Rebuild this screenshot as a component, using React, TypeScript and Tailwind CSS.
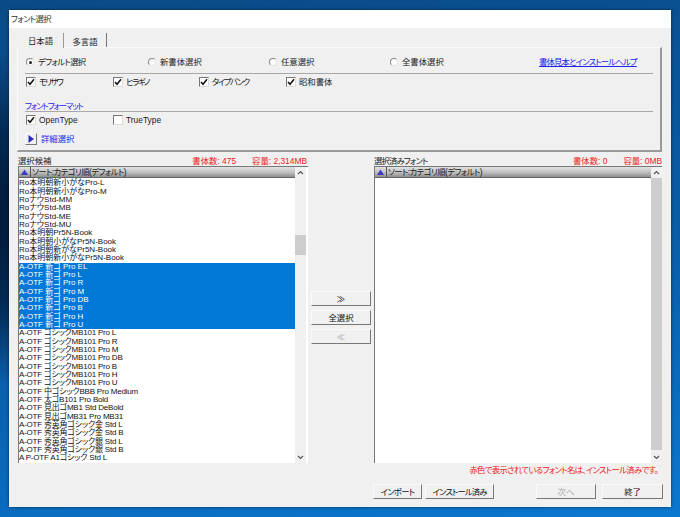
const FONT = "font-['Liberation_Sans','Noto_Sans_CJK_JP',sans-serif]";

const left = [
  "Ro本明朝新小がなPro-L", "Ro本明朝新小がなPro-M", "RoナウStd-MM", "RoナウStd-MB", "RoナウStd-ME", "RoナウStd-MU",
  "Ro本明朝Pr5N-Book", "Ro本明朝小がなPr5N-Book", "Ro本明朝新がなPr5N-Book", "Ro本明朝新小がなPr5N-Book",
  "A-OTF 新ゴ Pro EL", "A-OTF 新ゴ Pro L", "A-OTF 新ゴ Pro R", "A-OTF 新ゴ Pro M", "A-OTF 新ゴ Pro DB", "A-OTF 新ゴ Pro B", "A-OTF 新ゴ Pro H", "A-OTF 新ゴ Pro U",
  "A-OTF ゴシックMB101 Pro L", "A-OTF ゴシックMB101 Pro R", "A-OTF ゴシックMB101 Pro M", "A-OTF ゴシックMB101 Pro DB", "A-OTF ゴシックMB101 Pro B", "A-OTF ゴシックMB101 Pro H", "A-OTF ゴシックMB101 Pro U",
  "A-OTF 中ゴシックBBB Pro Medium", "A-OTF 太ゴB101 Pro Bold", "A-OTF 見出ゴMB1 Std DeBold", "A-OTF 見出ゴMB31 Pro MB31",
  "A-OTF 秀英角ゴシック金 Std L", "A-OTF 秀英角ゴシック金 Std B", "A-OTF 秀英角ゴシック銀 Std L", "A-OTF 秀英角ゴシック銀 Std B", "A P-OTF A1ゴシック Std L",
];

function Check({ label, checked, w }: { label: string; checked?: boolean; w: string }) {
  return (
    <div className={`flex items-center gap-[3px] ${w}`}>
      <div className="w-[10px] h-[10px] bg-white border-t border-l border-[#777] border-r border-b border-r-[#ddd] border-b-[#ddd] flex items-center justify-center">
        {checked && (
          <svg width="8" height="8" viewBox="0 0 8 8">
            <path d="M1 4 L3 6.3 L7 1.2" fill="none" stroke="#111" strokeWidth="1.5" />
          </svg>
        )}
      </div>
      <span className="text-[#222] whitespace-nowrap">{label}</span>
    </div>
  );
}

function Radio({ label, on, w }: { label: string; on?: boolean; w: string }) {
  return (
    <div className={`flex items-center gap-[4px] ${w}`}>
      <div className="w-[8px] h-[8px] rounded-full bg-white border border-t-[#888] border-l-[#888] border-r-[#e4e4e4] border-b-[#e4e4e4] flex items-center justify-center">
        {on && <div className="w-[3px] h-[3px] rounded-full bg-[#222]" />}
      </div>
      <span className="text-[#222] whitespace-nowrap">{label}</span>
    </div>
  );
}

function Btn({ label, w, disabled, mr }: { label: string; w: string; disabled?: boolean; mr?: string }) {
  return (
    <div
      className={`${w} ${mr ?? ""} h-[15px] shrink-0 whitespace-nowrap bg-[#f0f0f0] border border-t-[#fafafa] border-l-[#fafafa] border-r-[#777] border-b-[#777] flex items-center justify-center ${
        disabled ? "text-[#a8a8a8]" : "text-[#111]"
      }`}
    >
      {label}
    </div>
  );
}

function Caret({ up }: { up?: boolean }) {
  return (
    <div className="h-[11px] flex items-center justify-center shrink-0">
      <svg width="7" height="5" viewBox="0 0 7 5">
        <path d={up ? "M1 4 L3.5 1.5 L6 4" : "M1 1 L3.5 3.5 L6 1"} fill="none" stroke="#555" strokeWidth="1.2" />
      </svg>
    </div>
  );
}

function SortHeader() {
  return (
    <div className="h-[11px] flex shrink-0 bg-[linear-gradient(#e2e2e2,#c2c2c2_50%,#8e8e8e)] border-b border-[#666] items-center text-[#222]">
      <div className="w-[12px] h-full flex items-center justify-center border-r border-[#555]">
        <svg width="7" height="6" viewBox="0 0 7 6">
          <path d="M3.5 0.5 L7 6 L0 6 Z" fill="#3b3bc4" />
        </svg>
      </div>
      <span className="pl-[1px] whitespace-nowrap tracking-[-0.6px]">ソート:カテゴリ順(デフォルト)</span>
    </div>
  );
}

export default function App() {
  return (
    <div className={`w-[680px] h-[517px] overflow-hidden pt-[10px] pl-[9px] text-[8.4px] leading-[10px] [font-feature-settings:'palt'] ${FONT} bg-[radial-gradient(circle_at_-5%_42%,#02142c_0,#032a55_12%,transparent_22%),linear-gradient(170deg,#0a4a86_0%,#0a5da8_55%,#0b78d0_100%)]`}>
      <div className="w-[662px] h-[497px] bg-[#f0f0f0] flex flex-col shadow-[0_0_3px_rgba(0,0,0,0.6)]">
        <div className="h-[18px] bg-white pl-[2px] flex items-center text-[#333] shrink-0 tracking-[-0.7px]">フォント選択</div>

        <div className="flex flex-col pl-[8px] w-[653px]">
          <div className="flex mt-[5px] h-[14px] pl-[1px] relative z-10">
            <div className="w-[46px] flex items-start justify-center pt-[3px] border-r border-[#999] h-[15px] text-[#222] bg-[#f0f0f0]">日本語</div>
            <div className="w-[43px] flex items-start justify-center pt-[4px] border-r border-[#777] h-[14px] text-[#222]">多言語</div>
          </div>

          <div className="h-[105px] w-[645px] border-t border-t-[#fafafa] border-l border-l-[#fafafa] border-r-2 border-b-2 border-r-[#9a9a9a] border-b-[#9a9a9a] pl-[7px] flex flex-col">
            <div className="flex items-center h-[10px] mt-[9px] pl-[1px]">
              <Radio label="デフォルト選択" on w="w-[122px] tracking-[-0.7px]" />
              <Radio label="新書体選択" w="w-[121px]" />
              <Radio label="任意選択" w="w-[121px]" />
              <Radio label="全書体選択" w="w-[149px]" />
              <span className="text-[#2222ee] underline whitespace-nowrap tracking-[-0.85px]">書体見本とインストールヘルプ</span>
            </div>
            <div className="h-px w-[628px] bg-[#a8a8a8] mt-[6px]" />
            <div className="flex items-center h-[10px] pl-[1px] mt-[3px]">
              <Check label="モリサワ" checked w="w-[87px] tracking-[-1.8px]" />
              <Check label="ヒラギノ" checked w="w-[86px] tracking-[-1.5px]" />
              <Check label="タイプバンク" checked w="w-[87px] tracking-[-1.5px]" />
              <Check label="昭和書体" checked w="w-[80px]" />
            </div>
            <div className="mt-[14px] h-[10px] text-[#2222ee] tracking-[-1.2px]">フォントフォーマット</div>
            <div className="h-px w-[628px] bg-[#a8a8a8]" />
            <div className="flex items-center h-[10px] mt-[3px] pl-[1px]">
              <Check label="OpenType" checked w="w-[87px]" />
              <Check label="TrueType" w="w-[86px]" />
            </div>
            <div className="flex items-center mt-[8px] gap-[4px]">
              <div className="w-[12px] h-[12px] border border-t-[#fafafa] border-l-[#fafafa] border-r-[#777] border-b-[#777] flex items-center justify-center">
                <svg width="6" height="8" viewBox="0 0 6 8">
                  <path d="M0.5 0 L6 4 L0.5 8 Z" fill="#2a2ac0" />
                </svg>
              </div>
              <span className="text-[#2222ee]">詳細選択</span>
            </div>
          </div>

          <div className="flex mt-[3px]">
            <div className="w-[290px] ml-[1px] flex flex-col">
              <div className="flex h-[11px] items-center pr-[1px]">
                <span className="text-[#222] flex-1">選択候補</span>
                <span className="text-[#ee2222] mr-[16px]">書体数: 475</span>
                <span className="text-[#ee2222]">容量: 2,314MB</span>
              </div>
              <div className="h-[297px] flex border-l border-t border-[#777] bg-white">
                <div className="w-[276px] flex flex-col overflow-hidden">
                  <SortHeader />
                  <div className="flex-1 overflow-hidden pt-[1.4px] text-[8px]">
                    {left.map((t, i) => {
                      const sel = i >= 10 && i < 18;
                      return (
                        <div
                          key={i}
                          className={`h-[8.33px] leading-[8.33px] whitespace-nowrap ${i >= 18 ? "tracking-[-0.2px]" : ""} ${sel ? "bg-[#0078d7] text-white" : "text-[#111]"}`}
                        >
                          {t}
                        </div>
                      );
                    })}
                  </div>
                </div>
                <div className="w-[11px] bg-[#f0f0f0] flex flex-col">
                  <Caret up />
                  <div className="h-[57px]" />
                  <div className="h-[20px] bg-[#cdcdcd]" />
                  <div className="flex-1" />
                  <Caret />
                </div>
              </div>
            </div>

            <div className="w-[66px] flex flex-col pl-[3px] pt-[136px] gap-[4px]">
              <Btn label="≫" w="w-[60px]" />
              <Btn label="全選択" w="w-[60px]" />
              <Btn label="≪" w="w-[60px]" disabled />
            </div>

            <div className="w-[288px] flex flex-col">
              <div className="flex h-[11px] items-center">
                <span className="text-[#222] flex-1 tracking-[-0.9px]">選択済みフォント</span>
                <span className="text-[#ee2222] mr-[16px]">書体数: 0</span>
                <span className="text-[#ee2222]">容量: 0MB</span>
              </div>
              <div className="h-[297px] flex border-l border-t border-[#777] bg-white">
                <div className="w-[276px] flex flex-col">
                  <SortHeader />
                </div>
                <div className="w-[11px] bg-[#f0f0f0] flex flex-col">
                  <Caret up />
                  <div className="h-[272px] bg-[#cdcdcd]" />
                  <div className="flex-1" />
                  <Caret />
                </div>
              </div>
            </div>
          </div>

          <div className="w-[645px] text-right text-[#ee2222] mt-[2px] pr-[4px] h-[11px] tracking-[-0.7px]">赤色で表示されているフォント名は、インストール済みです。</div>

          <div className="flex mt-[8px] pl-[356px]">
            <Btn label="インポート" w="w-[49px] tracking-[-0.7px]" mr="mr-[3px]" />
            <Btn label="インストール済み" w="w-[69px] tracking-[-0.9px]" mr="mr-[42px]" />
            <Btn label="次へ" w="w-[60px]" disabled mr="mr-[6px]" />
            <Btn label="終了" w="w-[61px]" />
          </div>
        </div>
      </div>
    </div>
  );
}
